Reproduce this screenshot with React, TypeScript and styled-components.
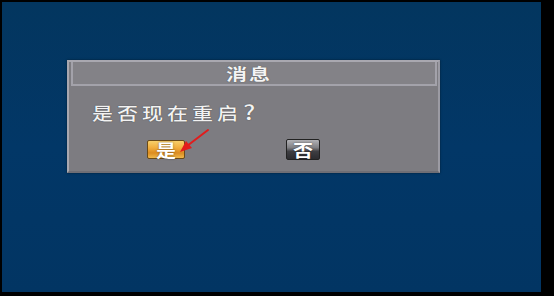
import React from "react";
import styled, { createGlobalStyle } from "styled-components";

const Global = createGlobalStyle`
  html, body { margin: 0; padding: 0; background: #000; }
  body { width: 554px; height: 296px; overflow: hidden; font-family: "Noto Sans CJK SC", "Liberation Sans", sans-serif; }
`;

const Frame = styled.div`
  width: 554px;
  height: 296px;
  background: #000;
  padding: 2px 13px 4px 2px;
  box-sizing: border-box;
  display: flex;
`;

const Screen = styled.div`
  flex: 1;
  background: linear-gradient(180deg, #03365f 0%, #023767 50%, #023563 100%);
  padding: 58px 0 0 65px;
  box-sizing: border-box;
  position: relative;
`;

const Dialog = styled.div`
  width: 373px;
  height: 113px;
  box-sizing: border-box;
  background: #7d7c81;
  border: 2px solid #a9a8b0;
  border-right-color: #9c9ba3;
  border-bottom-color: #6f6e75;
  box-shadow: 0 0 2px rgba(0, 0, 0, 0.5);
  padding: 0 1px 0 2px;
  display: flex;
  flex-direction: column;
  position: relative;
`;

const TitleBar = styled.div`
  height: 22px;
  border: 2px solid #a3a2aa;
  border-top: none;
  background: #838287;
  display: flex;
  align-items: center;
  justify-content: center;
  padding-right: 10px;
`;

const Title = styled.span`
  color: #f4f4f4;
  font-size: 21px;
  font-weight: 700;
  letter-spacing: 2px;
  transform: scaleY(0.78);
  text-shadow: 0 0 1px #333;
  line-height: 1;
`;

const Message = styled.div`
  margin: 10px 0 0 21px;
  height: 30px;
  display: flex;
  align-items: center;
  color: #f2f2f2;
  font-size: 21px;
  font-weight: 500;
  letter-spacing: 4px;
  text-shadow: 0 0 1px #222;
`;

const MessageText = styled.span`
  display: inline-block;
  transform: scaleY(0.8);
  transform-origin: left center;
`;

const Mark = styled.span`
  font-size: 25px;
  margin-left: 1px;
`;

const ButtonRow = styled.div`
  display: flex;
  align-items: center;
  margin-top: 13px;
  padding-left: 76px;
  gap: 101px;
`;

const Btn = styled.div<{ $active?: boolean }>`
  width: ${(p) => (p.$active ? 38 : 34)}px;
  height: ${(p) => (p.$active ? 19 : 21)}px;
  border-radius: 2px;
  display: flex;
  align-items: center;
  justify-content: center;
  color: #fff;
  font-size: 20px;
  font-weight: 700;
  line-height: 1;
  background: ${(p) =>
    p.$active
      ? "linear-gradient(180deg, #f8d06a 0%, #f2ae3e 40%, #dc8c20 70%, #f0b84a 100%)"
      : "linear-gradient(180deg, #b2b2b6 0%, #808084 40%, #3e3e42 60%, #2c2c30 100%)"};
  border: 1px solid ${(p) => (p.$active ? "#6a4a18" : "#222")};
  box-sizing: border-box;
  text-shadow: 0 0 2px rgba(0, 0, 0, 0.5);
`;

const BtnText = styled.span`
  display: inline-block;
  transform: scaleY(0.85);
`;

const Arrow = styled.svg`
  position: absolute;
  left: 108px;
  top: 66px;
  width: 36px;
  height: 28px;
  overflow: visible;
`;

export default function App() {
  return (
    <>
      <Global />
      <Frame>
        <Screen>
          <Dialog>
            <TitleBar>
              <Title>消息</Title>
            </TitleBar>
            <Message>
              <MessageText>
                是否现在重启<Mark>?</Mark>
              </MessageText>
            </Message>
            <ButtonRow>
              <Btn $active>
                <BtnText>是</BtnText>
              </Btn>
              <Btn>
                <BtnText>否</BtnText>
              </Btn>
            </ButtonRow>
            <Arrow viewBox="0 0 36 28">
              <line x1="31" y1="2" x2="10" y2="18" stroke="#e21c1c" strokeWidth="2" strokeLinecap="round" />
              <polygon points="3,24 9,13 15,20" fill="#e21c1c" />
            </Arrow>
          </Dialog>
        </Screen>
      </Frame>
    </>
  );
}
